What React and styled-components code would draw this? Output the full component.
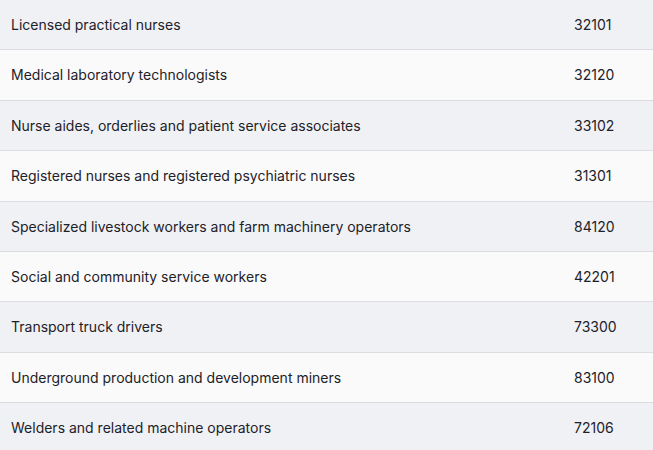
import styled, { createGlobalStyle } from "styled-components";

const GlobalStyle = createGlobalStyle`
  body {
    margin: 0;
    background: #ffffff;
    font-family: Inter, "Noto Sans", sans-serif;
  }
`;

const Table = styled.table`
  width: 653px;
  border-collapse: collapse;
  table-layout: fixed;
  font-size: 14px;
  color: #1d2129;
`;

const Col = styled.col`
  width: ${(p) => p.$width};
`;

const Row = styled.tr`
  background: ${(p) => (p.$odd ? "#f0f1f5" : "#fafafa")};
  border-bottom: 1px solid #dcdde0;
`;

const Cell = styled.td`
  padding: 16px 11px;
  line-height: 17.4px;
  vertical-align: middle;
`;

const rows = [
  ["Licensed practical nurses", "32101"],
  ["Medical laboratory technologists", "32120"],
  ["Nurse aides, orderlies and patient service associates", "33102"],
  ["Registered nurses and registered psychiatric nurses", "31301"],
  ["Specialized livestock workers and farm machinery operators", "84120"],
  ["Social and community service workers", "42201"],
  ["Transport truck drivers", "73300"],
  ["Underground production and development miners", "83100"],
  ["Welders and related machine operators", "72106"],
];

export default function App() {
  return (
    <>
      <GlobalStyle />
      <Table>
        <colgroup>
          <Col $width="563px" />
          <Col $width="90px" />
        </colgroup>
        <tbody>
          {rows.map(([name, code], i) => (
            <Row key={code} $odd={i % 2 === 0}>
              <Cell>{name}</Cell>
              <Cell>{code}</Cell>
            </Row>
          ))}
        </tbody>
      </Table>
    </>
  );
}
